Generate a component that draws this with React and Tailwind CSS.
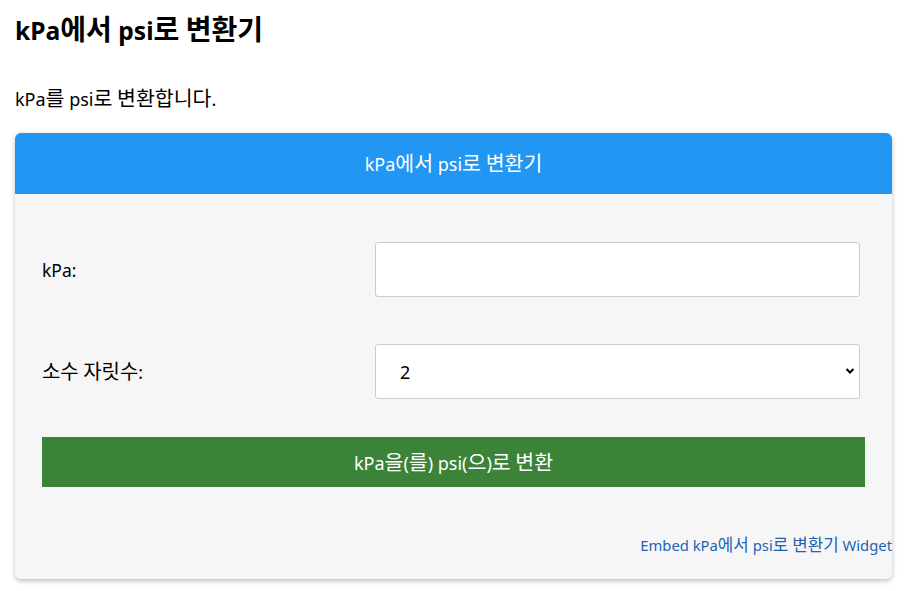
function K({ text }) {
  const parts = text.split(/([\uAC00-\uD7A3]+)/);
  return (
    <span>
      {parts.map((p, i) =>
        /[\uAC00-\uD7A3]/.test(p) ? (
          <span key={i} className="text-[1.14em]">{p}</span>
        ) : (
          <span key={i}>{p}</span>
        )
      )}
    </span>
  );
}

export default function App() {
  return (
    <div className="min-h-[591px] bg-white px-[15px] text-black" style={{ fontFamily: '"Noto Sans", "Noto Sans CJK KR", sans-serif' }}>
      <h1 className="pt-[11px] text-[24.6px] font-bold leading-[36px]"><K text="kPa에서 psi로 변환기" /></h1>
      <p className="mt-[37px] text-[18px] leading-[24px]"><K text="kPa를 psi로 변환합니다." /></p>
      <div className="mt-[22px] w-[877px] overflow-hidden rounded-[6px] bg-[#f6f6f6] shadow-[0_2px_5px_rgba(0,0,0,0.25)]">
        <div className="flex h-[61px] items-center justify-center bg-[#2196f3] text-[18px] leading-[24px] text-white"><K text="kPa에서 psi로 변환기" /></div>
        <div className="pl-[27px] pt-[48px] pb-[24px]">
          <div className="flex h-[55px] items-center">
            <label className="w-[333px] text-[17.5px] leading-[24px]"><K text="kPa:" /></label>
            <input type="text" className="h-[55px] w-[485px] rounded-[3px] border border-[#cccccc] bg-white px-3 outline-none" />
          </div>
          <div className="mt-[47px] flex h-[55px] items-center">
            <label className="w-[333px] text-[17.5px] leading-[24px]"><K text="소수 자릿수:" /></label>
            <div className="relative h-[55px] w-[485px] rounded-[3px] border border-[#cccccc] bg-white">
              <span className="absolute left-[24px] top-[15px] text-[18px] leading-[24px]">2</span>
              <svg className="absolute right-[4px] top-[22px]" width="10" height="8" viewBox="0 0 10 8">
                <path d="M1.5 2 L5 5.5 L8.5 2" fill="none" stroke="black" strokeWidth="2" />
              </svg>
            </div>
          </div>
          <button className="mt-[38px] flex h-[50px] w-[823px] items-center justify-center bg-[#3b8339] text-[18px] leading-[24px] text-white"><K text="kPa을(를) psi(으)로 변환" /></button>
          <div className="mt-[48px] text-right text-[14.8px] leading-[20px] text-[#1c63b5]"><K text="Embed kPa에서 psi로 변환기 Widget" /></div>
        </div>
      </div>
    </div>
  );
}
